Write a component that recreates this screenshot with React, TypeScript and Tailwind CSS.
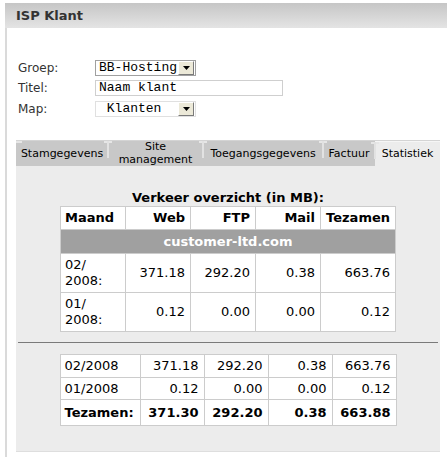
import React from "react";

function Arrow() {
  return (
    <div className="w-[16px] h-[14px] bg-[#ece9d8] border border-t-white border-l-white border-r-[#7a7a7a] border-b-[#7a7a7a] flex items-center justify-center">
      <svg width="7" height="4" viewBox="0 0 7 4">
        <polygon points="0,0 7,0 3.5,4" fill="#000" />
      </svg>
    </div>
  );
}

function Sep() {
  return (
    <>
      <div className="absolute left-[-4px] top-0 w-[8px] h-[2px] bg-[#e6e6e6]" />
      <div className="absolute left-[-1px] top-0 w-[2px] h-[17px] bg-[#e2e2e2]" />
    </>
  );
}

const tabs = [
  { label: "Stamgegevens", w: "w-[92px]" },
  { label: "Site management", w: "w-[95px]", two: true },
  { label: "Toegangsgegevens", w: "w-[120px]" },
  { label: "Factuur", w: "w-[52px]" },
];

export default function App() {
  const cell = "border border-[#cccccc] bg-white pl-[4px] pr-[5px]";
  return (
    <div className="w-[447px] h-[457px] bg-white overflow-hidden font-['DejaVu_Sans',Verdana,sans-serif] text-black">
      <div className="pt-[3px] pl-[5px]">
        <div className="h-[25px] bg-linear-to-b from-[#c6c6c6] to-[#e4e4e4] flex items-center pl-[11px] text-[13px] font-bold text-[#333]">
          ISP Klant
        </div>
        <div className="border-l-2 border-[#dadada] h-[429px]">
          <div className="pl-[11px] pt-[32px] text-[12px] text-[#333]">
            <div className="flex items-center h-[16px]">
              <div className="w-[77px]">Groep:</div>
              <div className="w-[101px] h-[16px] border border-[#a0a0a0] flex items-center justify-between pl-[3px] pr-[1px] bg-white">
                <span className="font-['Liberation_Mono',monospace] text-[13px] leading-[14px] text-black">BB-Hosting</span>
                <Arrow />
              </div>
            </div>
            <div className="flex items-center h-[16px] mt-[4px]">
              <div className="w-[77px]">Titel:</div>
              <div className="w-[188px] h-[16px] border border-[#cfcfcf] flex items-center pl-[3px] bg-white">
                <span className="font-['Liberation_Mono',monospace] text-[13px] leading-[14px] text-black">Naam klant</span>
              </div>
            </div>
            <div className="flex items-center h-[16px] mt-[5px]">
              <div className="w-[77px]">Map:</div>
              <div className="w-[101px] h-[16px] border border-[#e0e0e0] flex items-center justify-between pl-[3px] pr-[1px] bg-white">
                <span className="font-['Liberation_Mono',monospace] text-[13px] leading-[14px] text-black whitespace-pre"> Klanten</span>
                <Arrow />
              </div>
            </div>
          </div>

          <div className="ml-[9px] mr-[7px] mt-[23px]">
            <div className="flex h-[26px] bg-[#c8c8c8] border-t border-[#d4d4d4] text-[11px] text-black">
              {tabs.map((t, i) => (
                <div key={i} className={`relative ${t.w} flex items-center justify-center text-center leading-[13px]`}>
                  {i > 0 ? <Sep /> : <div className="absolute left-0 top-0 w-[6px] h-[2px] bg-[#e6e6e6]" />}
                  {t.two ? (
                    <span className="pb-[1px]">Site<br />management</span>
                  ) : (
                    <span>{t.label}</span>
                  )}
                </div>
              ))}
              <div className="relative w-[65px] flex items-center justify-center bg-[#ececec] border-t border-[#f6f6f6]">
                <Sep />
                <span>Statistiek</span>
              </div>
            </div>
            <div className="h-[286px] bg-[#ececec] border-b border-[#dedede] flex flex-col items-center pt-[24px]">
              <div className="text-[13px] font-bold leading-[16px]">Verkeer overzicht (in MB):</div>
              <table className="border-collapse table-fixed w-[335px] text-[13px] leading-[16px]">
                <colgroup>
                  <col className="w-[65px]" />
                  <col className="w-[65px]" />
                  <col className="w-[65px]" />
                  <col className="w-[65px]" />
                  <col className="w-[75px]" />
                </colgroup>
                <tbody>
                  <tr className="h-[23px] font-bold">
                    <td className={`${cell} text-left`}>Maand</td>
                    <td className={`${cell} text-right`}>Web</td>
                    <td className={`${cell} text-right`}>FTP</td>
                    <td className={`${cell} text-right`}>Mail</td>
                    <td className={`${cell} text-right`}>Tezamen</td>
                  </tr>
                  <tr className="h-[24px]">
                    <td colSpan={5} className="border border-[#cccccc] bg-[#a0a0a0] text-white font-bold text-center">
                      customer-ltd.com
                    </td>
                  </tr>
                  <tr className="h-[39px]">
                    <td className={`${cell} text-left`}>02/<br />2008:</td>
                    <td className={`${cell} text-right`}>371.18</td>
                    <td className={`${cell} text-right`}>292.20</td>
                    <td className={`${cell} text-right`}>0.38</td>
                    <td className={`${cell} text-right`}>663.76</td>
                  </tr>
                  <tr className="h-[39px]">
                    <td className={`${cell} text-left`}>01/<br />2008:</td>
                    <td className={`${cell} text-right`}>0.12</td>
                    <td className={`${cell} text-right`}>0.00</td>
                    <td className={`${cell} text-right`}>0.00</td>
                    <td className={`${cell} text-right`}>0.12</td>
                  </tr>
                </tbody>
              </table>
              <div className="mt-[10px] w-[420px] border-t border-[#7a7a7a]" />
              <table className="mt-[11px] border-collapse table-fixed w-[336px] text-[13px] leading-[16px]">
                <colgroup>
                  <col className="w-[80px]" />
                  <col className="w-[64px]" />
                  <col className="w-[64px]" />
                  <col className="w-[64px]" />
                  <col className="w-[64px]" />
                </colgroup>
                <tbody>
                  <tr className="h-[23px]">
                    <td className={`${cell} text-left`}>02/2008</td>
                    <td className={`${cell} text-right`}>371.18</td>
                    <td className={`${cell} text-right`}>292.20</td>
                    <td className={`${cell} text-right`}>0.38</td>
                    <td className={`${cell} text-right`}>663.76</td>
                  </tr>
                  <tr className="h-[22px]">
                    <td className={`${cell} text-left`}>01/2008</td>
                    <td className={`${cell} text-right`}>0.12</td>
                    <td className={`${cell} text-right`}>0.00</td>
                    <td className={`${cell} text-right`}>0.00</td>
                    <td className={`${cell} text-right`}>0.12</td>
                  </tr>
                  <tr className="h-[26px] font-bold">
                    <td className={`${cell} text-left`}>Tezamen:</td>
                    <td className={`${cell} text-right`}>371.30</td>
                    <td className={`${cell} text-right`}>292.20</td>
                    <td className={`${cell} text-right`}>0.38</td>
                    <td className={`${cell} text-right`}>663.88</td>
                  </tr>
                </tbody>
              </table>
            </div>
          </div>
        </div>
      </div>
    </div>
  );
}
